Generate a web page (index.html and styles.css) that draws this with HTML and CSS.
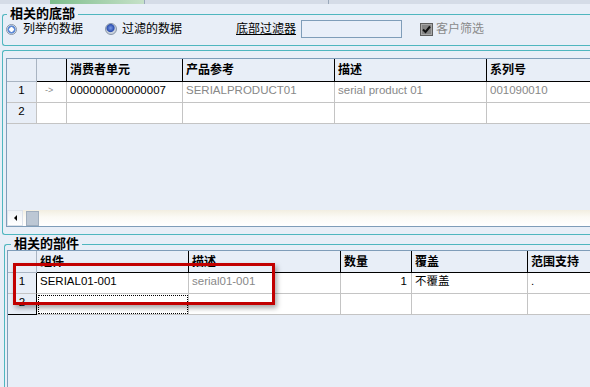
FILE: index.html
```html
<!DOCTYPE html>
<html lang="zh">
<head>
    <meta charset="UTF-8">
    <title>相关的底部</title>
    <link rel="stylesheet" href="styles.css">
</head>
<body>
    <div class="tabstrip">
        <span class="tab-gap"></span>
        <span class="tab-active"></span>
        <span class="tab-sep"></span>
        <span class="tab-rest"></span>
        <span class="tab-sep"></span>
    </div>

    <fieldset class="group group-top">
        <legend>相关的底部</legend>
        <div class="filter-row">
            <label class="radio radio-first"><span class="radio-dot"></span>列举的数据</label>
            <label class="radio radio-second checked"><span class="radio-dot"></span>过滤的数据</label>
            <span class="filter-link">底部过滤器</span>
            <span class="textbox"></span>
            <label class="check disabled">
                <span class="check-box">
                    <svg width="9" height="9" viewBox="0 0 9 9"><path d="M1 4.5 L3.5 7 L8 1.5" fill="none" stroke="#111" stroke-width="2"/></svg>
                </span>客户筛选
            </label>
        </div>
    </fieldset>

    <div class="panel-grid">
        <div class="grid grid-main">
            <table class="data">
                <thead>
                    <tr>
                        <th class="rownum w30"></th>
                        <th class="w30"></th>
                        <th class="w116">消费者单元</th>
                        <th class="w152">产品参考</th>
                        <th class="w152">描述</th>
                        <th>系列号</th>
                    </tr>
                </thead>
                <tbody>
                    <tr>
                        <td class="rownum">1</td>
                        <td class="marker">-&gt;</td>
                        <td>000000000000007</td>
                        <td class="dim">SERIALPRODUCT01</td>
                        <td class="dim">serial product 01</td>
                        <td class="dim">001090010</td>
                    </tr>
                    <tr>
                        <td class="rownum">2</td>
                        <td></td>
                        <td></td>
                        <td></td>
                        <td></td>
                        <td></td>
                    </tr>
                </tbody>
            </table>
            <div class="grid-fill"></div>
            <div class="hscroll">
                <span class="sb-btn"><span class="sb-arrow"></span></span>
                <span class="sb-thumb"></span>
            </div>
        </div>
    </div>

    <fieldset class="group group-parts">
        <legend>相关的部件</legend>
        <div class="grid grid-parts">
            <table class="data parts">
                <thead>
                    <tr>
                        <th class="rownum w29"></th>
                        <th class="w152">组件</th>
                        <th class="w152">描述</th>
                        <th class="w71">数量</th>
                        <th class="w116">覆盖</th>
                        <th>范围支持</th>
                    </tr>
                </thead>
                <tbody>
                    <tr>
                        <td class="rownum">1</td>
                        <td>SERIAL01-001</td>
                        <td class="dim">serial01-001</td>
                        <td class="num">1</td>
                        <td>不覆盖</td>
                        <td>.</td>
                    </tr>
                    <tr class="current">
                        <td class="rownum">2</td>
                        <td class="focus"></td>
                        <td></td>
                        <td></td>
                        <td></td>
                        <td></td>
                    </tr>
                </tbody>
            </table>
        </div>
    </fieldset>

    <div class="highlight"></div>
</body>
</html>
```

FILE: styles.css
```css
body {
margin: 0;
width: 590px;
height: 387px;
overflow: hidden;
position: relative;
background-color: #e8eef7;
font-family: "Liberation Sans", "Noto Sans CJK SC", sans-serif;
font-size: 12px;
color: #000;
}


/* tab strip at the very top */
.tabstrip {
display: flex;
height: 4px;
background-color: #d5dce7;
}

.tab-gap {
width: 50px;
}

.tab-active {
width: 94px;
background: linear-gradient(90deg, #7dbd8c, #c6e1c8);
}

.tab-sep {
width: 1px;
background-color: #9aa9bb;
}

.tab-rest {
width: 183px;
}


/* group boxes, cut off by the right edge of the window */
.group {
margin: 0;
padding: 0;
min-width: 0;
border: 1px solid #4fb6bf;
border-right: none;
border-radius: 3px 0 0 3px;
}

.group legend {
font-weight: bold;
font-size: 13px;
line-height: 12px;
padding: 0 3px;
margin-left: 4px;
}

.group-top {
margin: 4px 0 0 2px;
}

.filter-row {
display: flex;
align-items: center;
height: 18px;
padding: 0 0 7px 3px;
line-height: 14px;
}

.radio {
display: flex;
align-items: center;
}

.radio-dot {
width: 11px;
height: 11px;
box-sizing: border-box;
border: 1px solid #8795a8;
border-radius: 50%;
margin-right: 6px;
}

.radio-first .radio-dot {
background: radial-gradient(circle, #fff 0 2px, #5d8ad6 2.5px 3.8px, #dfe6ef 4.3px);
}

.radio-second {
margin-left: 22px;
}

.radio-second .radio-dot {
width: 12px;
height: 12px;
margin-right: 5px;
background: radial-gradient(circle at 45% 40%, #7a9be6 0, #2d4fb0 3.6px, #c9d1dc 4.6px);
}

.filter-link {
margin-left: 54px;
text-decoration: underline;
}

.textbox {
width: 101px;
height: 18px;
box-sizing: border-box;
margin-left: 5px;
border: 1px solid #7f9db9;
background-color: #e9eff9;
}

.check {
display: flex;
align-items: center;
margin-left: 18px;
color: #8a8a8a;
}

.check-box {
display: flex;
align-items: center;
justify-content: center;
width: 13px;
height: 13px;
box-sizing: border-box;
margin-right: 3px;
border: 1px solid #5e5e5e;
background-color: #858585;
box-shadow: inset 0 0 0 1px #a8a8a8;
}


/* first grid */
.panel-grid {
margin: 4px 0 0 2px;
padding: 7px 0 7px 3px;
border: 1px solid #4fb6bf;
border-right: none;
border-radius: 3px 0 0 3px;
}

.grid {
border: 1px solid #7f9db9;
border-right: none;
background-color: #e8eef7;
}

.grid-main {
height: 169px;
box-sizing: border-box;
display: flex;
flex-direction: column;
}

.grid-fill {
flex: 1;
}

.data {
border-collapse: separate;
border-spacing: 0;
table-layout: fixed;
width: 100%;
}

.data th,
.data td {
box-sizing: border-box;
white-space: nowrap;
overflow: hidden;
text-align: left;
}

.data th {
font: bold 12px/15px "Noto Sans CJK SC", sans-serif;
padding: 2px 3px 5px;
border-right: 1px solid #000;
border-bottom: 1px solid #000;
background-color: #e8eef7;
}

.data th.rownum {
border-right-color: #a9b4c2;
border-bottom-color: #a9b4c2;
}

.data td {
font-size: 11.5px;
line-height: 14px;
padding: 1px 3px 5px;
border-right: 1px solid #c4c4c4;
border-bottom: 1px solid #c4c4c4;
background-color: #fff;
}

.data th:last-child,
.data td:last-child {
border-right: none;
}

.data td.rownum {
text-align: center;
background-color: #e8eef7;
}

.data td.marker {
font-size: 9px;
color: #8a8a8a;
padding-left: 8px;
}

.data .dim {
color: #888;
}

.data td.num {
text-align: right;
padding-right: 4px;
}

.w29 { width: 29px; }
.w30 { width: 30px; }
.w71 { width: 71px; }
.w116 { width: 116px; }
.w152 { width: 152px; }


/* horizontal scroll bar */
.hscroll {
display: flex;
height: 16px;
background: linear-gradient(#f2eee1, #fbfaf5 45%, #fff);
}

.sb-btn {
display: flex;
align-items: center;
justify-content: center;
width: 16px;
box-sizing: border-box;
border: 1px solid #dde3eb;
background: linear-gradient(#eef2f7, #fff);
}

.sb-arrow {
width: 0;
height: 0;
border-top: 3px solid transparent;
border-bottom: 3px solid transparent;
border-right: 3px solid #000;
}

.sb-thumb {
width: 13px;
margin: 1px 0 0 3px;
box-sizing: border-box;
border: 1px solid #9fadbd;
background-color: #bcc7d4;
}


/* second grid, runs on below the window */
.group-parts {
margin: 3px 0 0 4px;
padding: 0 0 0 2px;
border-bottom: none;
border-radius: 3px 0 0 0;
}

.grid-parts {
height: 137px;
box-sizing: border-box;
border-bottom: none;
}

.parts th {
padding: 2px 3px 4px;
}

.parts td.rownum {
border-right-color: #000;
}

.parts tr.current td.rownum {
border-bottom-color: #000;
}

.parts td.focus {
outline: 1px dotted #000;
outline-offset: -2px;
}


/* red marker drawn over the parts grid */
.highlight {
position: absolute;
left: 13px;
top: 263px;
width: 262px;
height: 42px;
box-sizing: border-box;
border: 3px solid #c20000;
box-shadow: 2px 3px 5px rgba(0, 0, 0, 0.35);
}
```
